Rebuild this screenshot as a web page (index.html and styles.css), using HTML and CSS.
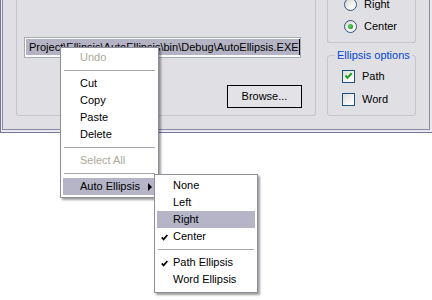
FILE: index.html
```html
<!DOCTYPE html>
<html>
<head>
<meta charset="utf-8">
<link rel="stylesheet" href="styles.css">
</head>
<body>
<div class="window">
  <div class="client">
    <div class="group-main">
      <div class="textbox"><span class="sel">Project\Ellipsis\AutoEllipsis\bin\Debug\AutoEllipsis.EXE</span></div>
      <div class="btn">Browse...</div>
    </div>
    <div class="side">
      <div class="group-align">
        <div class="opt first"><span class="radio"></span><span>Right</span></div>
        <div class="opt second"><span class="radio on"></span><span>Center</span></div>
      </div>
      <fieldset class="group-ellipsis">
        <legend>Ellipsis options</legend>
        <div class="opt path"><span class="check"><svg width="11" height="11" viewBox="0 0 11 11"><path d="M2.5 4.5 L4.5 6.8 L8.7 2.3" fill="none" stroke="#21a121" stroke-width="2"/></svg></span><span>Path</span></div>
        <div class="opt word"><span class="check"></span><span>Word</span></div>
      </fieldset>
    </div>
  </div>
</div>

<div class="menu main-menu">
  <div class="item disabled">Undo</div>
  <div class="sep"></div>
  <div class="item">Cut</div>
  <div class="item">Copy</div>
  <div class="item">Paste</div>
  <div class="item">Delete</div>
  <div class="sep"></div>
  <div class="item disabled">Select All</div>
  <div class="sep"></div>
  <div class="item hot">Auto Ellipsis<span class="arrow"></span></div>
</div>

<div class="menu sub-menu">
  <div class="item"><span class="mark"></span>None</div>
  <div class="item"><span class="mark"></span>Left</div>
  <div class="item hot"><span class="mark"></span>Right</div>
  <div class="item"><span class="mark"><svg width="7" height="7" viewBox="0 0 7 7"><path d="M0.8 3.4 L2.6 5.4 L6.4 1" fill="none" stroke="#000" stroke-width="1.7"/></svg></span>Center</div>
  <div class="sep"></div>
  <div class="item"><span class="mark"><svg width="7" height="7" viewBox="0 0 7 7"><path d="M0.8 3.4 L2.6 5.4 L6.4 1" fill="none" stroke="#000" stroke-width="1.7"/></svg></span>Path Ellipsis</div>
  <div class="item"><span class="mark"></span>Word Ellipsis</div>
</div>
</body>
</html>
```
FILE: styles.css
```css
* { box-sizing: border-box; }
html, body {
  margin: 0;
  padding: 0;
  background: #ffffff;
}
body {
  width: 432px;
  height: 300px;
  overflow: hidden;
  position: relative;
  font-family: "Liberation Sans", Arial, sans-serif;
  font-size: 11px;
  color: #000;
}
.window {
  width: 433px;
  height: 133px;
  border: 1px solid #76769a;
  border-top: none;
  background: #e9e9ef;
  padding: 0 2px 2px 1px;
}
.client {
  height: 100%;
  border: 1px solid #8a8aa6;
  border-top: none;
  background: #e0dfe3;
  display: flex;
  padding-left: 13px;
}
.group-main {
  width: 300px;
  height: 116px;
  border: 1px solid #c6c4cc;
  border-top: none;
  border-radius: 0 0 3px 3px;
  padding: 37px 13px 0 7px;
  display: flex;
  flex-direction: column;
}
.textbox {
  width: 277px;
  height: 21px;
  border: 1px solid #a5acb2;
  background: #fff;
  padding: 1px 0 0 1px;
  overflow: hidden;
  white-space: nowrap;
}
.sel {
  display: inline-block;
  height: 16px;
  line-height: 16px;
  background: #b4b3c4;
  padding-left: 3px;
  border-right: 1px solid #000;
}
.btn {
  align-self: flex-end;
  margin-top: 27px;
  width: 75px;
  height: 23px;
  border: 1px solid #000;
  background: #e3e2e6;
  text-align: center;
  line-height: 21px;
}
.side {
  margin-left: 11px;
  width: 89px;
  display: flex;
  flex-direction: column;
}
.group-align {
  height: 43px;
  border: 1px solid #c6c4cc;
  border-top: none;
  border-radius: 0 0 3px 3px;
  padding-left: 16px;
}
.opt {
  display: flex;
  align-items: center;
  height: 13px;
  gap: 7px;
  line-height: 13px;
}
.opt.first { margin-top: -2px; }
.opt.second { margin-top: 9px; }
.radio {
  width: 13px;
  height: 13px;
  border-radius: 50%;
  border: 1px solid #2d5786;
  background: linear-gradient(135deg, #d6d6d2 0%, #f4f4f2 60%, #ffffff 100%);
  display: flex;
  align-items: center;
  justify-content: center;
  flex: none;
}
.radio.on::after {
  content: "";
  width: 5px;
  height: 5px;
  border-radius: 50%;
  background: radial-gradient(circle at 40% 40%, #6fd46f 0%, #2aa52a 60%, #1b8a1b 100%);
}
.group-ellipsis {
  margin: 6px 0 0 0;
  padding: 0 0 0 7px;
  border: 1px solid #c6c4cc;
  border-radius: 3px;
  height: 67px;
  min-width: 0;
  width: 89px;
}
.group-ellipsis legend {
  padding: 0 2px;
  color: #0046d5;
  line-height: 13px;
  height: 13px;
}
.opt.path { margin: 8px 0 0 7px; }
.opt.word { margin: 10px 0 0 7px; }
.check {
  width: 13px;
  height: 13px;
  border: 1px solid #1c5180;
  background: linear-gradient(135deg, #dcdcd7 0%, #f3f3f1 60%, #ffffff 100%);
  flex: none;
  display: block;
}
.check svg { display: block; }

.menu {
  position: absolute;
  background: #ffffff;
  border: 1px solid #8e8e9a;
  box-shadow: 2px 2px 2px rgba(0, 0, 0, 0.38);
}
.main-menu {
  left: 60px;
  top: 47px;
  width: 99px;
  padding: 1px 1px 2px 1px;
}
.sub-menu {
  left: 154px;
  top: 174px;
  width: 104px;
  padding: 2px 1px 4px 1px;
}
.item {
  height: 17px;
  line-height: 17px;
  margin: 0 1px;
  display: flex;
  align-items: center;
  white-space: nowrap;
}
.main-menu .item { padding-left: 17px; }
.item.disabled { color: #aca899; }
.item.hot { background: #b6b5c8; }
.sep {
  height: 9px;
  margin: 0 1px;
  padding-top: 4px;
}
.sep::before {
  content: "";
  display: block;
  height: 1px;
  margin: 0 1px;
  background: #a7a6aa;
}
.arrow {
  margin-left: auto;
  margin-right: 4px;
  width: 0;
  height: 0;
  border-left: 4px solid #000;
  border-top: 4px solid transparent;
  border-bottom: 4px solid transparent;
}
.mark {
  width: 16px;
  height: 17px;
  flex: none;
  display: flex;
  align-items: center;
  padding-left: 4px;
  padding-top: 1px;
}
.mark svg { display: block; }
```
